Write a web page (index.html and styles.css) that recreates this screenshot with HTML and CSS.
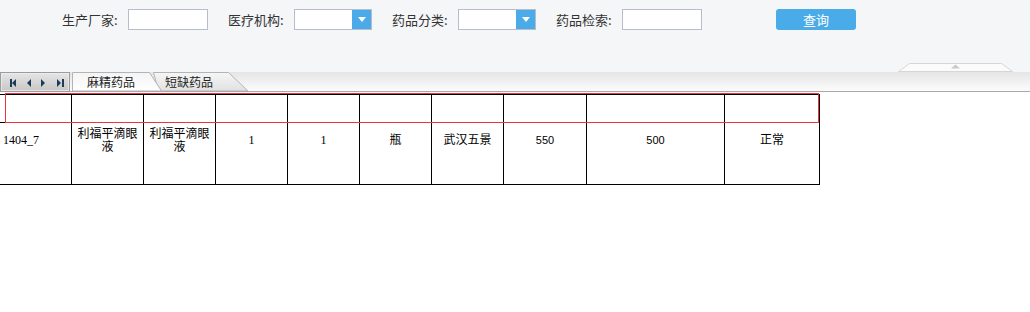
FILE: index.html
```html
<!DOCTYPE html>
<html lang="zh-CN">
<head>
  <meta charset="UTF-8" />
  <title>药品查询</title>
  <link rel="stylesheet" href="styles.css">
</head>
<body>
  <!-- Query bar -->
  <div class="query">
    <div class="field"><label>生产厂家:</label><input class="box" type="text" /></div>
    <div class="field"><label>医疗机构:</label><div class="combo"><input type="text" /><span class="arrow"></span></div></div>
    <div class="field"><label>药品分类:</label><div class="combo"><input type="text" /><span class="arrow"></span></div></div>
    <div class="field"><label>药品检索:</label><input class="box" type="text" /></div>
    <button class="btn-query">查询</button>
    <svg class="expand" width="116" height="10" viewBox="0 0 116 10">
      <polygon points="11.5,1.5 103.5,1.5 114.5,9.5 0.5,9.5" fill="#fbfbfc" stroke="#d6d6d6" />
      <polygon points="53,6.5 57.5,2.5 62,6.5" fill="#c9c9c9" />
    </svg>
  </div>

  <!-- Sheet tabs -->
  <div class="tabbar">
    <div class="tab-nav">
      <svg width="70" height="20" viewBox="0 0 70 20">
        <defs>
          <linearGradient id="navbg" x1="0" y1="0" x2="0" y2="1">
            <stop offset="0" stop-color="#e6e6e6" />
            <stop offset="1" stop-color="#c6c6c6" />
          </linearGradient>
        </defs>
        <rect x="0.5" y="0.5" width="69" height="19" fill="url(#navbg)" stroke="#9c9c9c" />
        <rect x="1.5" y="1.5" width="67" height="17" fill="none" stroke="#efefef" stroke-opacity="0.7" />
        <g fill="#1d3a57">
          <rect x="10" y="7" width="2" height="8" />
          <polygon points="16,7 16,15 12,11" />
          <polygon points="31,7 31,15 27,11" />
          <polygon points="41,7 41,15 45,11" />
          <polygon points="57,7 57,15 61,11" />
          <rect x="62" y="7" width="2" height="8" />
        </g>
      </svg>
    </div>
    <div class="tab tab-active">
      <svg class="tab-shape" width="90" height="19" viewBox="0 0 90 19">
        <defs>
          <linearGradient id="tabon" x1="0" y1="0" x2="0" y2="1">
            <stop offset="0" stop-color="#f4f4f4" />
            <stop offset="1" stop-color="#ffffff" />
          </linearGradient>
        </defs>
        <polygon points="0.5,19 0.5,0.5 77.5,0.5 89.5,19" fill="url(#tabon)" stroke="#b4b4b4" />
      </svg>
      <span>麻精药品</span>
    </div>
    <div class="tab">
      <svg class="tab-shape" width="97" height="19" viewBox="0 0 97 19">
        <defs>
          <linearGradient id="taboff" x1="0" y1="0" x2="0" y2="1">
            <stop offset="0" stop-color="#f6f6f6" />
            <stop offset="1" stop-color="#e1e1e1" />
          </linearGradient>
        </defs>
        <polygon points="6.5,19 1.5,0.5 76.5,0.5 96,19" fill="url(#taboff)" stroke="#b4b4b4" />
      </svg>
      <span>短缺药品</span>
    </div>
  </div>

  <!-- Report grid -->
  <div class="grid">
    <div class="selection"></div>
    <div class="sheet">
      <div class="row head">
        <div class="cell"></div><div class="cell"></div><div class="cell"></div><div class="cell"></div><div class="cell"></div>
        <div class="cell"></div><div class="cell"></div><div class="cell"></div><div class="cell"></div><div class="cell"></div>
      </div>
      <div class="row data">
        <div class="cell first">1404_7</div>
        <div class="cell">利福平滴眼液</div>
        <div class="cell">利福平滴眼液</div>
        <div class="cell">1</div>
        <div class="cell">1</div>
        <div class="cell">瓶</div>
        <div class="cell">武汉五景</div>
        <div class="cell num">550</div>
        <div class="cell num">500</div>
        <div class="cell">正常</div>
      </div>
    </div>
  </div>
</body>
</html>
```

FILE: styles.css
```css
body {
  margin: 0;
  background: #fff;
  font-family: "Noto Sans CJK SC", sans-serif;
  color: #333;
}

.query {
  position: relative;
  display: flex;
  align-items: flex-start;
  gap: 20px;
  height: 72px;
  box-sizing: border-box;
  padding: 9px 0 0 62px;
  background: #f5f6f8;
}
.field {
  display: flex;
  align-items: center;
  height: 21px;
}
.field label {
  width: 66px;
  font-size: 13px;
  line-height: 21px;
  color: #333;
}
input {
  margin: 0;
  padding: 0;
  font-size: 12px;
  outline: none;
}
.box {
  width: 80px;
  height: 21px;
  box-sizing: border-box;
  border: 1px solid #b9bccc;
  background: #fff;
}
.combo {
  display: flex;
  width: 78px;
  height: 21px;
  box-sizing: border-box;
  border: 1px solid #b9bccc;
  background: #fff;
}
.combo input {
  flex: 1;
  min-width: 0;
  border: 0;
  background: transparent;
}
.combo .arrow {
  display: flex;
  align-items: center;
  justify-content: center;
  width: 19px;
  background: #4aabe8;
}
.combo .arrow::after {
  content: "";
  border-left: 4px solid transparent;
  border-right: 4px solid transparent;
  border-top: 5px solid #fff;
}
.btn-query {
  margin-left: 54px;
  width: 80px;
  height: 21px;
  padding: 0;
  border: none;
  border-radius: 3px;
  background: #4aabe9;
  color: #fff;
  font-family: "Noto Sans CJK SC", sans-serif;
  font-size: 13px;
  line-height: 21px;
}
.expand {
  position: absolute;
  left: 898px;
  bottom: 0;
}

.tabbar {
  display: flex;
  align-items: flex-end;
  height: 19px;
  border-bottom: 1px solid #a9a9a9;
  background: linear-gradient(#e5e5e5, #fcfcfc);
}
.tab-nav {
  width: 70px;
  height: 20px;
  margin-bottom: -1px;
}
.tab-nav svg {
  display: block;
}
.tab {
  position: relative;
  height: 19px;
  width: 97px;
  margin-left: -10px;
  font-size: 12px;
  line-height: 19px;
  color: #222;
}
.tab-active {
  width: 90px;
  margin-left: 2px;
  z-index: 2;
}
.tab-shape {
  position: absolute;
  left: 0;
  top: 0;
}
.tab span {
  position: relative;
  display: block;
  padding-left: 13px;
}
.tab-active span {
  padding-left: 15px;
}

.grid {
  position: relative;
  padding-top: 2px;
}
.selection {
  position: absolute;
  left: 5px;
  top: 1px;
  width: 814px;
  height: 30px;
  box-sizing: border-box;
  border: 1px solid #e8383d;
  z-index: 2;
}
.sheet {
  width: 820px;
  margin-left: -1px;
  border-top: 1px solid #000;
  border-left: 1px solid #000;
  font-family: "Liberation Serif", "Noto Sans CJK SC", serif;
  font-size: 12px;
  line-height: 13px;
  color: #000;
}
.row {
  display: grid;
  grid-template-columns: 72px 72px 72px 72px 72px 72px 72px 83px 138px 95px;
}
.cell {
  display: flex;
  align-items: center;
  justify-content: center;
  box-sizing: border-box;
  padding: 0 4px;
  border-right: 1px solid #000;
  border-bottom: 1px solid #000;
  text-align: center;
}
.head .cell {
  height: 28px;
}
.data .cell {
  height: 62px;
  padding-bottom: 26px;
}
.data .first {
  justify-content: flex-start;
  padding-left: 3px;
}
.data .num {
  font-family: "Liberation Sans", sans-serif;
  font-size: 11px;
}
```
